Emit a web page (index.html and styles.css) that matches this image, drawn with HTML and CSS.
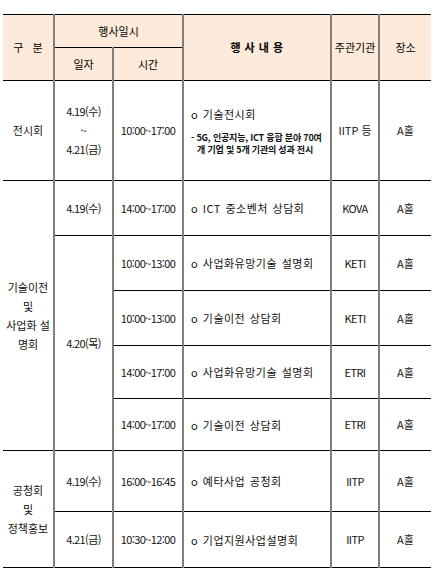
FILE: index.html
```html
<!DOCTYPE html>
<html lang="ko">
<head>
<meta charset="utf-8">
<link rel="stylesheet" href="styles.css">
</head>
<body>
<table class="sched">
  <colgroup>
    <col class="c1"><col class="c2"><col class="c3"><col class="c4"><col class="c5"><col class="c6">
  </colgroup>
  <thead>
    <tr class="h1">
      <th rowspan="2" class="cat">구&nbsp;&nbsp;&nbsp;분</th>
      <th colspan="2">행사일시</th>
      <th rowspan="2" class="spaced">행 사 내 용</th>
      <th rowspan="2">주관기관</th>
      <th rowspan="2" class="place">장소</th>
    </tr>
    <tr class="h2">
      <th>일자</th>
      <th>시간</th>
    </tr>
  </thead>
  <tbody>
    <tr class="r-expo">
      <td class="cat">전시회</td>
      <td class="num">4.19(수)<br>~<br>4.21(금)</td>
      <td class="num">10:00~17:00</td>
      <td class="content">
        <div class="item">o 기술전시회</div>
        <div class="sub">- 5G, 인공지능, ICT 융합 분야 70여</div>
        <div class="sub indent">개 기업 및 5개 기관의 성과 전시</div>
      </td>
      <td>IITP 등</td>
      <td class="place">A홀</td>
    </tr>
    <tr class="r55">
      <td rowspan="5" class="cat">기술이전<br>및<br>사업화 설<br>명회</td>
      <td class="num">4.19(수)</td>
      <td class="num">14:00~17:00</td>
      <td class="content"><div class="item">o ICT 중소벤처 상담회</div></td>
      <td class="num">KOVA</td>
      <td class="place">A홀</td>
    </tr>
    <tr class="r55">
      <td rowspan="4" class="num">4.20(목)</td>
      <td class="num">10:00~13:00</td>
      <td class="content"><div class="item">o 사업화유망기술 설명회</div></td>
      <td class="num">KETI</td>
      <td class="place">A홀</td>
    </tr>
    <tr class="r55">
      <td class="num">10:00~13:00</td>
      <td class="content"><div class="item">o 기술이전 상담회</div></td>
      <td class="num">KETI</td>
      <td class="place">A홀</td>
    </tr>
    <tr class="r53">
      <td class="num">14:00~17:00</td>
      <td class="content"><div class="item">o 사업화유망기술 설명회</div></td>
      <td class="num">ETRI</td>
      <td class="place">A홀</td>
    </tr>
    <tr class="r52">
      <td class="num">14:00~17:00</td>
      <td class="content"><div class="item">o 기술이전 상담회</div></td>
      <td class="num">ETRI</td>
      <td class="place">A홀</td>
    </tr>
    <tr class="r61">
      <td rowspan="2" class="cat">공청회<br>및<br>정책홍보</td>
      <td class="num">4.19(수)</td>
      <td class="num">16:00~16:45</td>
      <td class="content"><div class="item">o 예타사업 공청회</div></td>
      <td class="num">IITP</td>
      <td class="place">A홀</td>
    </tr>
    <tr class="r56">
      <td class="num">4.21(금)</td>
      <td class="num">10:30~12:00</td>
      <td class="content"><div class="item">o 기업지원사업설명회</div></td>
      <td class="num">IITP</td>
      <td class="place">A홀</td>
    </tr>
  </tbody>
</table>
</body>
</html>
```
FILE: styles.css
```css
html, body {
  margin: 0;
  padding: 0;
  background: #ffffff;
}
body {
  padding: 14px 0 0 3px;
  font-family: "Noto Sans CJK KR", "Noto Sans", sans-serif;
  font-size: 11px;
  color: #111;
}
.sched {
  border-collapse: collapse;
  table-layout: fixed;
  width: 428px;
}
.c1 { width: 51px; }
.c2 { width: 59px; }
.c3 { width: 70px; }
.c4 { width: 148px; }
.c5 { width: 48px; }
.c6 { width: 52px; }

.sched th,
.sched td {
  border-top: 1px solid #000;
  border-bottom: 1px solid #000;
  border-left: 2px solid #808080;
  border-right: 2px solid #808080;
  padding: 0;
  text-align: center;
  vertical-align: middle;
  font-weight: normal;
  line-height: 19px;
  overflow: hidden;
  white-space: nowrap;
}
.sched .cat { border-left: none; }
.sched .place { border-right: none; }

.sched th {
  background: #fdeada;
  color: #000;
}
.h1 { height: 33px; }
.h2 { height: 33px; }
.r-expo { height: 100px; }
.r55 { height: 55px; }
.r53 { height: 53px; }
.r52 { height: 52px; }
.r61 { height: 61px; }
.r56 { height: 56px; }

.sched .num {
  letter-spacing: -0.6px;
}
.sched .content {
  text-align: left;
  padding-left: 7px;
  letter-spacing: 0.5px;
  word-spacing: 1px;
}
.item { line-height: 16px; }
.sub {
  font-size: 9px;
  font-weight: bold;
  line-height: 12px;
  letter-spacing: -0.2px;
  word-spacing: 0;
}
.r-expo .item { margin-bottom: 10px; }
.indent { padding-left: 6px; }
.sched .spaced { font-weight: bold; letter-spacing: 0.5px; }
```
